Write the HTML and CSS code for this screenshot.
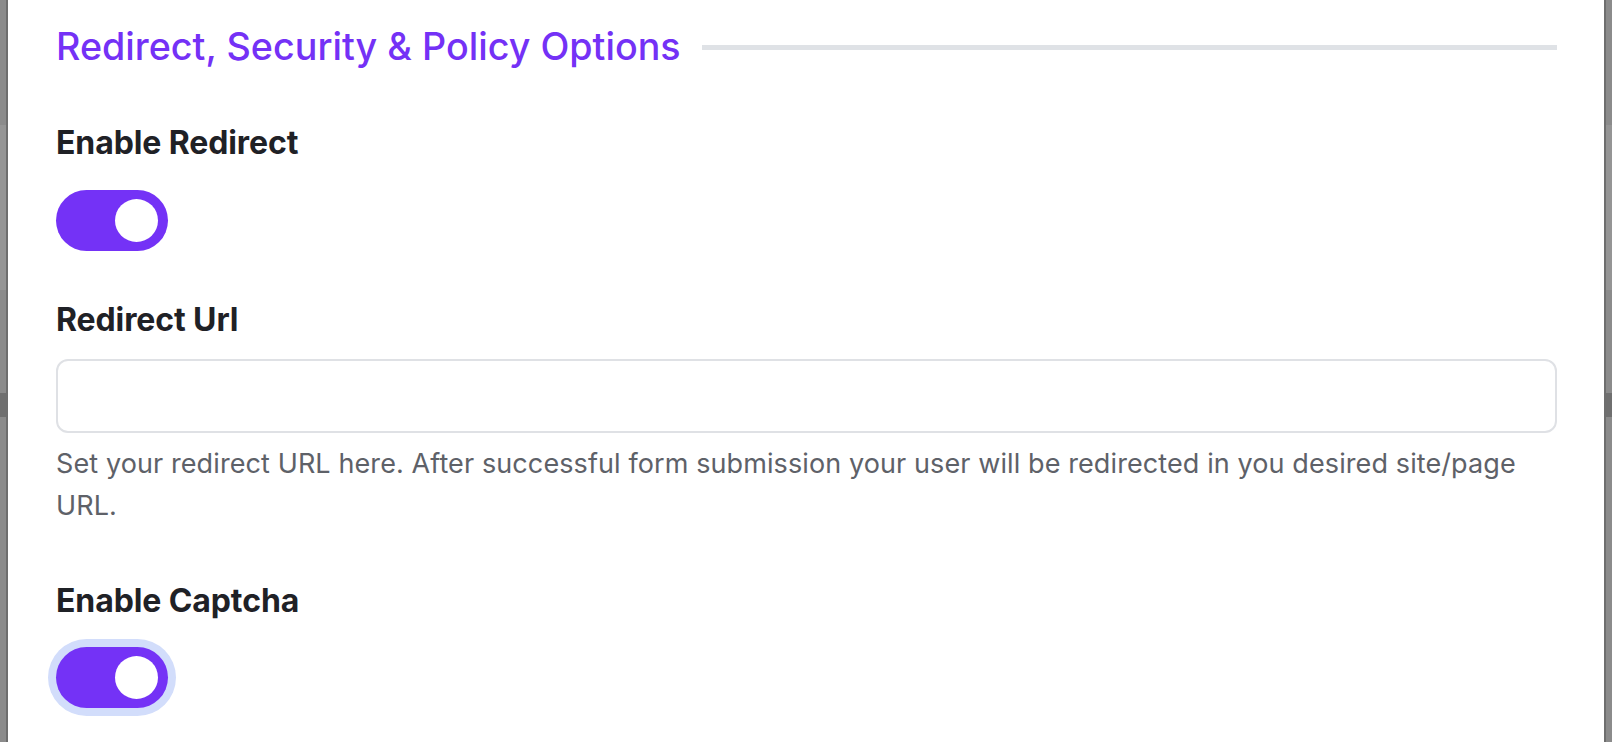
FILE: index.html
```html
<!DOCTYPE html>
<html lang="en">
<head>
<meta charset="utf-8">
<title>Redirect, Security &amp; Policy Options</title>
<link rel="stylesheet" href="styles.css">
</head>
<body>
<div class="modal">
  <div class="section-head">
    <h2 class="section-title">Redirect, Security &amp; Policy Options</h2>
    <div class="section-rule"></div>
  </div>

  <div class="field field-first">
    <label class="field-label">Enable Redirect</label>
    <span class="toggle is-on"><span class="knob"></span></span>
  </div>

  <div class="field">
    <label class="field-label label-input" for="redirect-url">Redirect Url</label>
    <input class="text-input" id="redirect-url" type="text">
    <p class="help">Set your redirect URL here. After successful form submission your user will be redirected in you desired site/page URL.</p>
  </div>

  <div class="field field-captcha">
    <label class="field-label">Enable Captcha</label>
    <span class="toggle is-on is-focus"><span class="knob"></span></span>
  </div>
</div>
</body>
</html>
```

FILE: styles.css
```css
html, body {
  margin: 0;
  padding: 0;
  height: 100%;
}

body {
  background:
    linear-gradient(to bottom,
      #8b8b8b 0, #8b8b8b 125px,
      #959595 125px, #959595 290px,
      #8b8b8b 290px, #8b8b8b 393px,
      #6f6f6f 393px, #6f6f6f 417px,
      #8b8b8b 417px);
  font-family: Inter, "Noto Sans", "Liberation Sans", sans-serif;
  overflow: hidden;
}

.modal {
  box-sizing: border-box;
  margin-left: 6px;
  width: 1600px;
  height: 742px;
  background: #ffffff;
  border-left: 2px solid #6e6e6e;
  border-right: 2px solid #6e6e6e;
  padding: 24px 47px 0 48px;
}

.section-head {
  display: flex;
  align-items: center;
  gap: 21px;
  height: 45px;
}

.section-title {
  margin: 0;
  font-size: 37.7px;
  line-height: 45px;
  font-weight: 500;
  color: #7431f6;
  white-space: nowrap;
}

.section-rule {
  flex: 1;
  height: 5px;
  margin-top: 2px;
  background: #dfe2e6;
}

.field {
  display: flex;
  flex-direction: column;
  align-items: flex-start;
}

.field-first {
  margin-top: 55px;
}

.field-label {
  display: block;
  font-size: 32px;
  line-height: 38px;
  font-weight: 700;
  color: #1f2126;
  letter-spacing: -0.1px;
  margin-bottom: 28px;
}

.label-input {
  margin-top: 50px;
  margin-bottom: 20px;
}

.field-captcha .field-label {
  margin-top: 55px;
  margin-bottom: 27px;
}

.toggle {
  position: relative;
  display: block;
  width: 112px;
  height: 61px;
  border-radius: 31px;
  background: #7432f6;
}

.toggle .knob {
  position: absolute;
  top: 9px;
  right: 10px;
  width: 43px;
  height: 43px;
  border-radius: 50%;
  background: #ffffff;
}

.toggle.is-focus {
  box-shadow: 0 0 0 8px #d2ddfb;
}

.text-input {
  box-sizing: border-box;
  width: 100%;
  height: 74px;
  margin: 0;
  border: 2px solid #dfe1e5;
  border-radius: 12px;
  background: #ffffff;
  font: inherit;
  outline: none;
}

.help {
  margin: 10px 0 0;
  font-size: 27px;
  line-height: 42px;
  color: #5e6168;
  font-weight: 400;
  letter-spacing: 0.1px;
}
```
